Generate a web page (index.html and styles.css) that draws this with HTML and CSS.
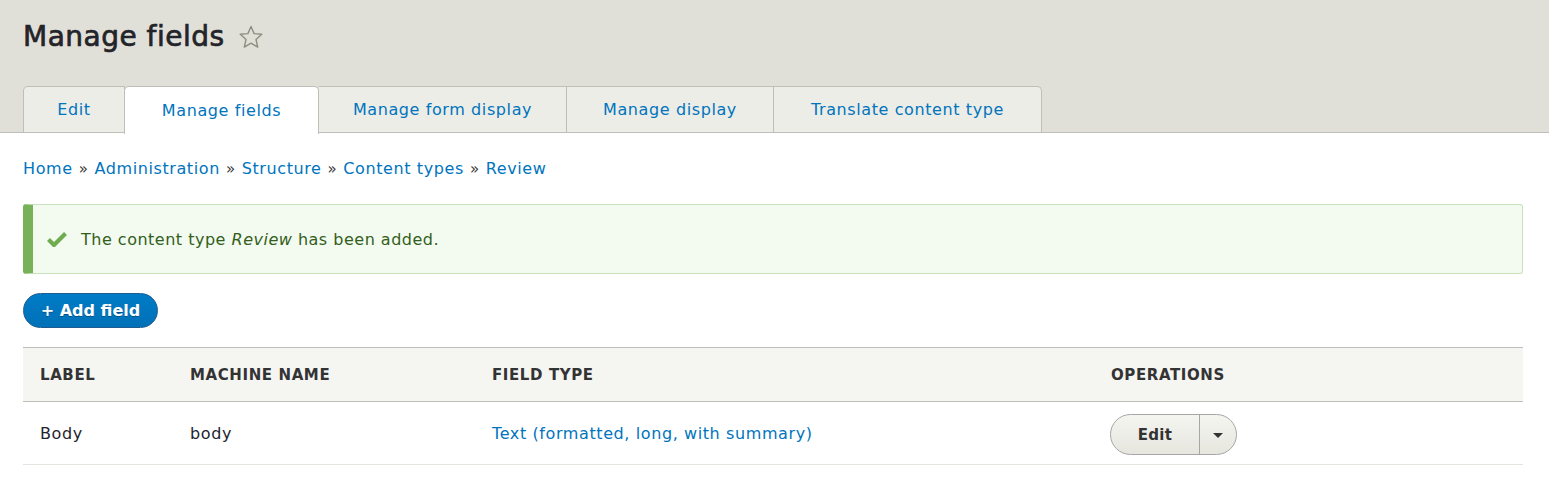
FILE: index.html
```html
<!DOCTYPE html>
<html>
<head>
<meta charset="utf-8">
<link rel="stylesheet" href="styles.css">
</head>
<body>
<header class="header">
  <div class="title-row">
    <h1 class="title">Manage fields</h1>
    <svg class="star" width="26" height="24" viewBox="0 0 26 24"><path d="M13 1.5 L16.1 8.6 L23.8 9.3 L18 14.5 L19.7 22.1 L13 18.1 L6.3 22.1 L8 14.5 L2.2 9.3 L9.9 8.6 Z" fill="none" stroke="#8e8f80" stroke-width="1.4" stroke-linejoin="round"/></svg>
  </div>
  <nav class="tabs">
    <a class="tab tab-first">Edit</a>
    <a class="tab tab-active">Manage fields</a>
    <a class="tab">Manage form display</a>
    <a class="tab">Manage display</a>
    <a class="tab tab-last">Translate content type</a>
  </nav>
</header>
<main class="content">
  <div class="breadcrumb">
    <a>Home</a><span class="sep">»</span><a>Administration</a><span class="sep">»</span><a>Structure</a><span class="sep">»</span><a>Content types</a><span class="sep">»</span><a>Review</a>
  </div>
  <div class="message">
    <svg class="check" width="20" height="16" viewBox="0 0 20 16"><path d="M1.5 8.5 L7 14 L18.5 2.5" fill="none" stroke="#6fac4f" stroke-width="4.2"/></svg>
    <span>The content type <em>Review</em> has been added.</span>
  </div>
  <div class="actions">
    <a class="button-primary">+ Add field</a>
  </div>
  <table class="fields">
    <thead>
      <tr>
        <th class="c-label">Label</th>
        <th class="c-machine">Machine name</th>
        <th class="c-type">Field type</th>
        <th class="c-ops">Operations</th>
      </tr>
    </thead>
    <tbody>
      <tr>
        <td>Body</td>
        <td>body</td>
        <td><a>Text (formatted, long, with summary)</a></td>
        <td>
          <div class="dropbutton">
            <span class="drop-main">Edit</span>
            <span class="drop-toggle"><span class="arrow"></span></span>
          </div>
        </td>
      </tr>
    </tbody>
  </table>
</main>
</body>
</html>
```

FILE: styles.css
```css
html, body {
  margin: 0;
  padding: 0;
  background: #fff;
}
body {
  font-family: "DejaVu Sans", sans-serif;
  font-size: 16px;
  letter-spacing: 0.6px;
  color: #222330;
}
a {
  color: #0074bd;
  text-decoration: none;
}
.header {
  background: #e0e0d8;
  border-bottom: 1px solid #bebfb9;
  padding: 0 23px;
}
.title-row {
  display: flex;
  align-items: center;
  height: 72px;
  gap: 13px;
}
.title {
  margin: 0;
  font-size: 28px;
  font-weight: normal;
  -webkit-text-stroke: 0.7px #232429;
  color: #232429;
  letter-spacing: 0.5px;
}
.star {
  margin-top: 2px;
}
.tabs {
  display: flex;
  margin-top: 14px;
  height: 46px;
}
.tab {
  display: flex;
  align-items: center;
  justify-content: center;
  background: #ededE7;
  border: 1px solid #bfbfba;
  border-bottom: none;
  border-left: none;
  font-size: 16px;
  color: #0074bd;
}
.tab-first {
  border-left: 1px solid #bfbfba;
  border-top-left-radius: 5px;
  width: 100px;
}
.tab-active {
  background: #fff;
  border-top-left-radius: 5px;
  border-top-right-radius: 5px;
  width: 193px;
  height: 47px;
  margin-bottom: -1px;
  border-left: 1px solid #bfbfba;
  margin-left: -1px;
}
.tab:nth-child(3) { width: 247px; }
.tab:nth-child(4) { width: 206px; }
.tab-last {
  width: 267px;
  border-top-right-radius: 5px;
}
.content {
  padding: 0 26px 0 23px;
}
.breadcrumb {
  padding-top: 25px;
  height: 22px;
  line-height: 22px;
  font-size: 16px;
}
.breadcrumb .sep {
  color: #333;
  margin: 0 6px;
  font-size: 15px;
}
.message {
  margin-top: 24px;
  display: flex;
  align-items: center;
  height: 68px;
  background: #f3faef;
  border: 1px solid #c9e1bd;
  border-left: 10px solid #77b259;
  border-radius: 3px;
  color: #325e1c;
  font-size: 16px;
  letter-spacing: 0.5px;
  padding-left: 14px;
}
.check {
  margin-right: 14px;
}
.actions {
  margin-top: 19px;
  height: 35px;
}
.button-primary {
  display: inline-flex;
  align-items: center;
  justify-content: center;
  height: 35px;
  width: 135px;
  border-radius: 18px;
  background: linear-gradient(#007bc6, #0071b8);
  border: 1px solid #1e5c90;
  box-sizing: border-box;
  color: #fff;
  font-weight: bold;
  font-size: 16px;
  letter-spacing: 0;
  text-shadow: 0 1px 0 rgba(0,0,0,0.3);
}
.fields {
  margin-top: 19px;
  width: 100%;
  border-collapse: collapse;
}
.fields th {
  background: #f5f5f2;
  border-top: 1px solid #bfbfba;
  border-bottom: 1px solid #bfbfba;
  text-align: left;
  text-transform: uppercase;
  font-weight: bold;
  font-size: 15px;
  color: #333;
  height: 53px;
  padding: 0 0 0 17px;
}
.fields td {
  height: 62px;
  padding: 0 0 0 17px;
  border-bottom: 1px solid #e6e4df;
  font-size: 16px;
}
.c-label { width: 133px; }
.c-machine { width: 285px; }
.c-type { width: 602px; }
.dropbutton {
  display: inline-flex;
  height: 41px;
  width: 127px;
  box-sizing: border-box;
  border: 1px solid #a6a6a6;
  border-radius: 21px;
  background: linear-gradient(#f5f5f0, #e6e6df);
  margin-left: -1px;
  margin-top: 3px;
}
.drop-main {
  width: 88px;
  display: flex;
  align-items: center;
  justify-content: center;
  font-weight: bold;
  font-size: 15px;
  letter-spacing: 0.3px;
  color: #333;
  border-right: 1px solid #a6a6a6;
}
.drop-toggle {
  flex: 1;
  display: flex;
  align-items: center;
  justify-content: center;
}
.arrow {
  width: 0;
  height: 0;
  border-left: 5px solid transparent;
  border-right: 5px solid transparent;
  border-top: 5px solid #333;
  margin-top: 2px;
}
```
